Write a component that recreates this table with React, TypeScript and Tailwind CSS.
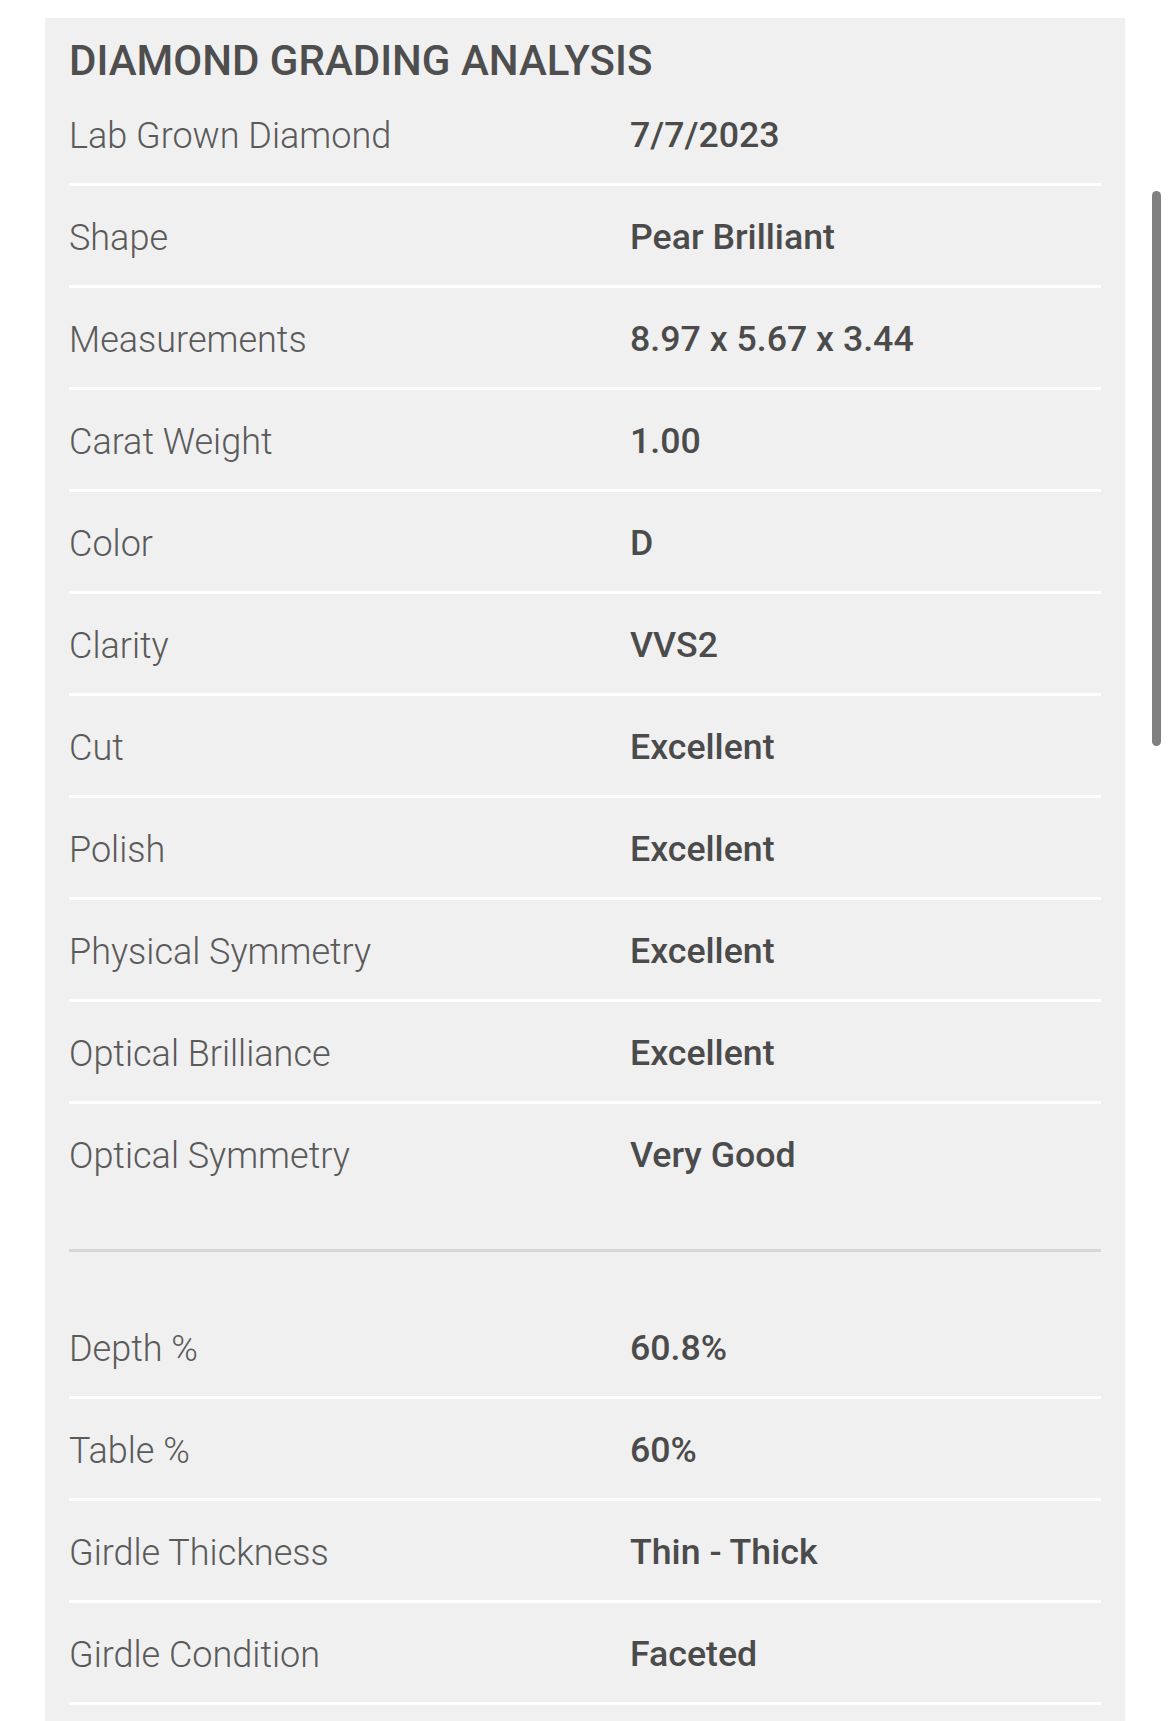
const filas = [
  { label: 'Lab Grown Diamond', valor: '7/7/2023' },
  { label: 'Shape', valor: 'Pear Brilliant' },
  { label: 'Measurements', valor: '8.97 x 5.67 x 3.44' },
  { label: 'Carat Weight', valor: '1.00' },
  { label: 'Color', valor: 'D' },
  { label: 'Clarity', valor: 'VVS2' },
  { label: 'Cut', valor: 'Excellent' },
  { label: 'Polish', valor: 'Excellent' },
  { label: 'Physical Symmetry', valor: 'Excellent' },
  { label: 'Optical Brilliance', valor: 'Excellent' },
]

const proporciones = [
  { label: 'Depth %', valor: '60.8%' },
  { label: 'Table %', valor: '60%' },
  { label: 'Girdle Thickness', valor: 'Thin - Thick' },
  { label: 'Girdle Condition', valor: 'Faceted' },
]

function Fila({ label, valor, borde = true }: { label: string; valor: string; borde?: boolean }) {
  return (
    <div
      className={`grid grid-cols-[561px_1fr] items-center pt-[4px] ${
        borde ? 'h-[102px] border-b-[3px] border-white' : 'h-[99px]'
      }`}
    >
      <span className="text-[36px] font-light text-[#5a5a5a] leading-none">{label}</span>
      <span className="text-[35.7px] font-medium text-[#4b4b4b] leading-none">{valor}</span>
    </div>
  )
}

export default function App() {
  return (
    <div className="relative min-h-[1721px] bg-white pt-[18px] font-['Roboto',sans-serif]">
      <section className="ml-[45px] w-[1080px] bg-[#f0f0f0] px-[24px] pt-[23px] pb-[60px]">
        <h1 className="text-[42px] font-medium leading-[40px] text-[#4e4e4e] mb-[3px]">
          DIAMOND GRADING ANALYSIS
        </h1>

        {filas.map((f) => (
          <Fila key={f.label} label={f.label} valor={f.valor} />
        ))}

        {/* última fila sin separador blanco */}
        <Fila label="Optical Symmetry" valor="Very Good" borde={false} />

        <div className="mt-[46px] mb-[45px] h-[3px] bg-[#d8d8d8]" />

        {proporciones.map((f) => (
          <Fila key={f.label} label={f.label} valor={f.valor} />
        ))}
      </section>

      {/* barra de scroll superpuesta */}
      <div className="absolute left-[1152px] top-[191px] w-[9px] h-[555px] rounded-full bg-[#808080]" />
    </div>
  )
}
